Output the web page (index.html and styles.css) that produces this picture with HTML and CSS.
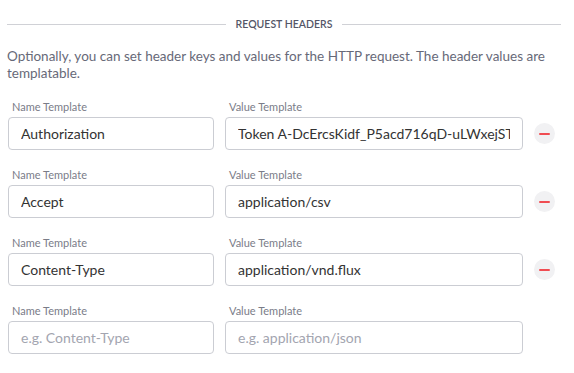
FILE: index.html
```html
<!DOCTYPE html>
<html lang="en">
<head>
    <meta charset="UTF-8">
    <title>Request Headers</title>
    <link rel="stylesheet" href="styles.css">
</head>
<body>
    <div class="headers-section">
        <div class="divider">
            <span class="divider-line"></span>
            <span class="divider-title">Request Headers</span>
            <span class="divider-line"></span>
        </div>
        <p class="help-text">Optionally, you can set header keys and values for the HTTP request. The header values are templatable.</p>

        <div class="header-row">
            <div class="field name-field">
                <label>Name Template</label>
                <input type="text" value="Authorization" placeholder="e.g. Content-Type">
            </div>
            <div class="field value-field">
                <label>Value Template</label>
                <input type="text" value="Token A-DcErcsKidf_P5acd716qD-uLWxejSTtmUsEsAuJqyRl7HrWhX7oEaTWpKjmyzTPcj-xkG==" placeholder="e.g. application/json">
            </div>
            <button class="remove-btn" type="button"><span class="minus"></span></button>
        </div>

        <div class="header-row">
            <div class="field name-field">
                <label>Name Template</label>
                <input type="text" value="Accept" placeholder="e.g. Content-Type">
            </div>
            <div class="field value-field">
                <label>Value Template</label>
                <input type="text" value="application/csv" placeholder="e.g. application/json">
            </div>
            <button class="remove-btn" type="button"><span class="minus"></span></button>
        </div>

        <div class="header-row">
            <div class="field name-field">
                <label>Name Template</label>
                <input type="text" value="Content-Type" placeholder="e.g. Content-Type">
            </div>
            <div class="field value-field">
                <label>Value Template</label>
                <input type="text" value="application/vnd.flux" placeholder="e.g. application/json">
            </div>
            <button class="remove-btn" type="button"><span class="minus"></span></button>
        </div>

        <div class="header-row">
            <div class="field name-field">
                <label>Name Template</label>
                <input type="text" placeholder="e.g. Content-Type">
            </div>
            <div class="field value-field">
                <label>Value Template</label>
                <input type="text" placeholder="e.g. application/json">
            </div>
        </div>
    </div>
</body>
</html>
```

FILE: styles.css
```css
body {
    margin: 0;
    font-family: Lato, "Open Sans", sans-serif;
    color: #333;
    background-color: #fff;
}
.headers-section {
    padding: 18px 13px 0 7px;
}
.divider {
    display: flex;
    align-items: center;
    gap: 10px;
}
.divider-line {
    flex: 1;
    height: 1px;
    background-color: #d0d1d6;
}
.divider-title {
    font-size: 10.5px;
    font-weight: 600;
    text-transform: uppercase;
    color: #545667;
}
.help-text {
    margin: 18px 0 18px;
    font-size: 13.5px;
    line-height: 17px;
    color: #676978;
}
.header-row {
    display: flex;
    align-items: flex-end;
    gap: 11px;
    padding-left: 1px;
    margin-bottom: 18px;
}
.field {
    display: flex;
    flex-direction: column;
}
.name-field {
    width: 206px;
}
.value-field {
    width: 298px;
}
label {
    font-size: 11px;
    line-height: 14px;
    color: #7a7c88;
    padding-left: 4px;
    margin-bottom: 3px;
}
input {
    height: 33px;
    box-sizing: border-box;
    border: 1px solid #cbcdd3;
    border-radius: 4px;
    padding: 0 12px;
    font-family: inherit;
    font-size: 14px;
    color: #333;
    background-color: #fff;
    outline: none;
}
input::placeholder {
    color: #a3a5b0;
}
.remove-btn {
    width: 21px;
    height: 21px;
    margin: 0 0 6px 0;
    border: none;
    border-radius: 50%;
    background-color: #f1f1f3;
    padding: 0;
    display: flex;
    align-items: center;
    justify-content: center;
    cursor: pointer;
}
.minus {
    width: 11px;
    height: 2px;
    background-color: #f04c52;
    border-radius: 1px;
}
```
